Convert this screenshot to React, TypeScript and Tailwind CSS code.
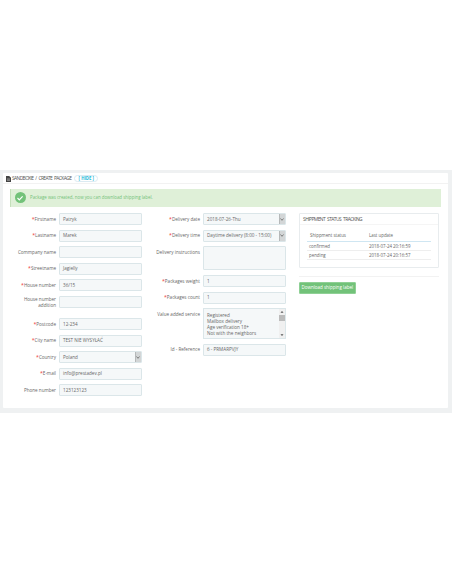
const font = { fontFamily: '"Open Sans", sans-serif' };

function Label({ text, req, w = "w-[46px]" }: { text: string; req?: boolean; w?: string }) {
  return (
    <div className={`${w} min-h-[12px] shrink-0 text-right text-[#666] text-[4.6px] leading-[6.3px] flex items-center justify-end`}>
      <span>
        {req && <span className="text-[#e33] text-[5.2px]">*</span>}
        {text}
      </span>
    </div>
  );
}

function Field({ value = "", h = "h-[12px]" }: { value?: string; h?: string }) {
  return (
    <div className={`w-[82.5px] ${h} shrink-0 bg-[#f5f8f9] border border-[#dbe6e9] rounded-[1px] px-[3px] flex items-center text-[4.6px] text-[#666] whitespace-nowrap overflow-hidden`}>
      {value}
    </div>
  );
}

function Select({ value }: { value: string }) {
  return (
    <div className="w-[82.5px] h-[12px] shrink-0 bg-[#f5f8f9] border border-[#dbe6e9] rounded-[1px] pl-[3px] flex items-center justify-between text-[4.6px] text-[#666] whitespace-nowrap overflow-hidden">
      <span>{value}</span>
      <span className="w-[6px] h-[10px] bg-[#d3d6d7] border-l border-[#b5b8b9] flex items-center justify-center shrink-0">
        <svg width="4" height="3" viewBox="0 0 4 3"><path d="M0.5 0.5 L2 2.3 L3.5 0.5" fill="none" stroke="#555" strokeWidth="0.7" /></svg>
      </span>
    </div>
  );
}

function Row({ label, req, value, select, mb = "mb-[4.5px]" }: { label: string; req?: boolean; value?: string; select?: boolean; mb?: string }) {
  return (
    <div className={`flex gap-[3px] ${mb}`}>
      <Label text={label} req={req} />
      {select ? <Select value={value ?? ""} /> : <Field value={value} />}
    </div>
  );
}

export default function App() {
  return (
    <div style={font} className="w-[452px] h-[584px] bg-white flex flex-col overflow-hidden">
      <div className="h-[170px] shrink-0" />
      <div className="h-[243px] shrink-0 bg-[#eff1f2] pt-[3px] pl-[3px] pr-[4px]">
        <div className="h-[235px] bg-white rounded-[1px] px-[7px]">
          <div className="h-[11px] -mx-[7px] pl-[3px] pt-[1px] border-b border-[#f2f2f2] flex items-center">
            <svg width="5" height="6" viewBox="0 0 5 6" className="mr-[1px]"><path d="M0 0h3.2L5 1.8V6H0z" fill="#444" /><path d="M1 3h3M1 4.3h3" stroke="#ddd" strokeWidth="0.5" /></svg>
            <span className="text-[4.9px] text-[#555] uppercase tracking-[-0.6px] [word-spacing:1.2px] whitespace-nowrap">Sandboxie / Create package</span>
            <span className="ml-[3px] h-[7px] w-[24px] border border-[#dbeaf2] rounded-full flex items-center justify-center text-[4.3px] font-bold text-[#25b9d7]">[ HIDE ]</span>
          </div>
          <div className="mt-[5px] h-[17.5px] bg-[#dff0d8] border-l border-[#c4e0ba] flex items-center pl-[3.5px]">
            <span className="w-[11px] h-[11px] rounded-full bg-[#72c279] flex items-center justify-center">
              <svg width="8" height="8" viewBox="0 0 8 8"><path d="M1.5 4 L3.3 5.8 L6.6 2.4" fill="none" stroke="#fff" strokeWidth="1.2" /></svg>
            </span>
            <span className="ml-[4.5px] text-[4.4px] text-[#72c279] whitespace-nowrap">Package was created, now you can download shipping label.</span>
          </div>
          <div className="flex mt-[6.5px]">
            <div className="w-[134px] shrink-0 flex flex-col">
              <Row label="Firstname" req value="Patryk" />
              <Row label="Lastname" req value="Marek" />
              <Row label="Commpany name" />
              <Row label="Streetname" req value="Jagielly" />
              <Row label="House number" req value="36/15" />
              <div className="flex gap-[3px] mb-[10px]">
                <Label text="House number addition" />
                <Field />
              </div>
              <Row label="Postcode" req value="12-234" />
              <Row label="City name" req value="TEST NIE WYSYŁAĆ" />
              <Row label="Country" req value="Poland" select />
              <Row label="E-mail" req value="info@prestadev.pl" />
              <Row label="Phone number" value="123123123" mb="" />
            </div>
            <div className="w-[141.5px] shrink-0 flex flex-col pl-[3px]">
              <div className="flex gap-[3px] mb-[4.5px]">
                <Label text="Delivery date" req w="w-[53px]" />
                <Select value="2018-07-26-Thu" />
              </div>
              <div className="flex gap-[3px] mb-[4.5px]">
                <Label text="Delivery time" req w="w-[53px]" />
                <Select value="Daytime delivery (8:00 - 15:00)" />
              </div>
              <div className="flex gap-[3px] mb-[5px]">
                <div className="self-start"><Label text="Delivery instructions" w="w-[53px]" /></div>
                <Field h="h-[24px]" />
              </div>
              <div className="flex gap-[3px] mb-[4.5px]">
                <Label text="Packages weight" req w="w-[53px]" />
                <Field value="1" />
              </div>
              <div className="flex gap-[3px] mb-[4.5px]">
                <Label text="Packages count" req w="w-[53px]" />
                <Field value="1" />
              </div>
              <div className="flex gap-[3px] mb-[5px]">
                <div className="self-start"><Label text="Value added service" w="w-[53px]" /></div>
                <div className="w-[82.5px] h-[30.5px] bg-[#f5f8f9] border border-[#dbe6e9] overflow-hidden flex">
                  <div className="flex-1 pl-[3px] pt-[2.5px] text-[4.6px] leading-[6.3px] text-[#666] whitespace-nowrap">
                    <div>Registered</div>
                    <div>Mailbox delivery</div>
                    <div>Age verification 18+</div>
                    <div>Not with the neighbors</div>
                    <div>Saturday</div>
                  </div>
                  <div className="w-[6px] h-full bg-[#f0f0f0] flex flex-col items-center shrink-0">
                    <svg width="6" height="6" viewBox="0 0 6 6"><path d="M1.5 3.8 L3 2 L4.5 3.8z" fill="#555" /></svg>
                    <div className="w-full h-[6px] bg-[#bbb]" />
                    <svg width="6" height="6" viewBox="0 0 6 6" className="mt-auto"><path d="M1.5 2.2 L3 4 L4.5 2.2z" fill="#555" /></svg>
                  </div>
                </div>
              </div>
              <div className="flex gap-[3px]">
                <Label text="Id - Reference" w="w-[53px]" />
                <Field value="6 - PRMARPVJY" />
              </div>
            </div>
            <div className="w-[153.5px] shrink-0 flex flex-col pl-[13.5px] pr-[0.5px]">
              <div className="h-[54.5px] border border-[#e8ecee] rounded-[1px]">
                <div className="h-[11px] px-[3px] pt-[1px] border-b border-[#f5f5f5] flex items-center text-[4.9px] uppercase text-[#555] tracking-[-0.55px] [word-spacing:1.2px] whitespace-nowrap">Shippment status tracking</div>
                <div className="mx-[7px] mt-[4px] text-[4.4px] text-[#666] whitespace-nowrap">
                  <div className="h-[13px] border-b border-[#cfe6f2] flex items-center">
                    <span className="w-[62px] pl-[3px]">Shippment status</span><span>Last update</span>
                  </div>
                  <div className="h-[9px] border-b border-[#eee] flex items-center">
                    <span className="w-[62px] pl-[2px]">confirmed</span><span>2018-07-24 20:16:59</span>
                  </div>
                  <div className="h-[9px] border-b border-[#eee] flex items-center">
                    <span className="w-[62px] pl-[2px]">pending</span><span>2018-07-24 20:16:57</span>
                  </div>
                </div>
              </div>
              <div className="mt-[8px] border-t border-[#f2f2f2] pt-[5.5px]">
                <div className="w-[56.5px] h-[11.5px] bg-[#72c279] border border-[#8fd095] rounded-[1px] flex items-center justify-center text-[4.5px] text-white whitespace-nowrap">Download shipping label</div>
              </div>
            </div>
          </div>
        </div>
      </div>
    </div>
  );
}
